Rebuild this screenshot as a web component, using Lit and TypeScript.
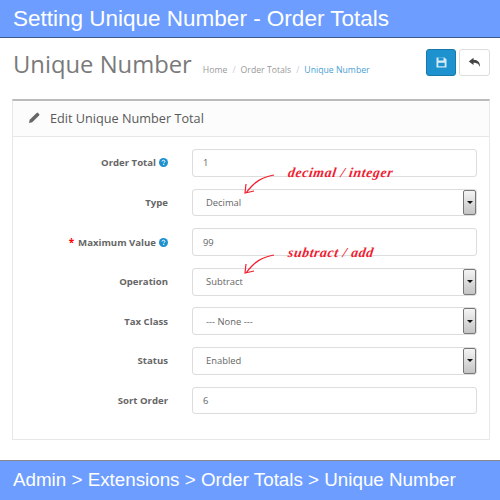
import { LitElement, html, css, nothing } from "lit";
import { customElement } from "lit/decorators.js";

const help = html`<svg class="help" viewBox="0 0 10 10" width="9" height="9"><circle cx="5" cy="5" r="5" fill="#1e91cf"/><path d="M3.4 3.9C3.5 2.9 4.2 2.5 5 2.5c.9 0 1.6.5 1.6 1.3 0 1.2-1.3 1.1-1.3 2.1" fill="none" stroke="#fff" stroke-width="1.1"/><rect x="4.6" y="6.6" width="1.3" height="1.2" fill="#fff"/></svg>`;

const rows = [
  { label: "Order Total", value: "1", help: true },
  { label: "Type", value: "Decimal", select: true },
  { label: "Maximum Value", value: "99", help: true, req: true },
  { label: "Operation", value: "Subtract", select: true },
  { label: "Tax Class", value: "--- None ---", select: true },
  { label: "Status", value: "Enabled", select: true },
  { label: "Sort Order", value: "6" },
];

@customElement("app-root")
export class AppRoot extends LitElement {
  static styles = css`
    :host { display: block; width: 500px; height: 500px; position: relative; overflow: hidden; background: #fff; font-family: "Open Sans", sans-serif; color: #666; }
    .page { display: flex; flex-direction: column; height: 500px; }
    .banner { background: #6d9eff; color: #fff; font-family: "Liberation Sans", sans-serif; font-size: 22.5px; height: 37px; line-height: 37px; padding-left: 13px; border-bottom: 1px solid #3d5a8a; white-space: nowrap; }
    .head { display: flex; align-items: flex-start; height: 61px; padding: 10px 10px 0 13px; box-sizing: border-box; }
    h1 { margin: 0; font-size: 23.8px; font-weight: 400; line-height: 32px; color: #7a7a7a; white-space: nowrap; }
    .crumbs { display: flex; gap: 5px; font-size: 8.7px; margin: 16px 0 0 11px; color: #999; white-space: nowrap; line-height: 12px; }
    .crumbs .sep { color: #ccc; }
    .crumbs .cur { color: #4a9fd4; }
    .btns { margin-left: auto; display: flex; gap: 3px; }
    .btn { width: 30px; height: 27px; border-radius: 3px; display: flex; align-items: center; justify-content: center; box-sizing: border-box; margin-top: 1px; }
    .save { background: #1e91cf; border: 1px solid #1978ab; }
    .back { background: #fff; border: 1px solid #ddd; width: 31px; }
    .panel { margin: 0 10px 0 12px; height: 341px; border: 1px solid #e8e8e8; border-top: 2px solid #bbb; box-sizing: border-box; display: flex; flex-direction: column; }
    .phead { height: 33px; padding-bottom: 2px; background: #fcfcfc; border-bottom: 1px solid #e8e8e8; display: flex; align-items: center; padding-left: 16px; gap: 10px; font-size: 12.7px; color: #595959; white-space: nowrap; box-sizing: content-box; }
    .form { display: grid; grid-auto-rows: 27.8px; row-gap: 11.8px; padding: 12px 12px 0 0; }
    .row { display: grid; grid-template-columns: 179px 1fr; align-items: center; }
    label { display: flex; justify-content: flex-end; align-items: center; gap: 3px; font-size: 9.6px; font-weight: 700; color: #666; white-space: nowrap; padding-right: 24px; }
    .req { color: #f00; margin-right: 1px; font-size: 10px; }
    .help { margin-left: 0; }
    .field { height: 100%; border: 1px solid #ddd; border-radius: 3px; display: flex; align-items: center; padding-left: 10px; font-size: 9.4px; color: #666; box-sizing: border-box; position: relative; box-shadow: inset 0 0 1px #eee; }
    .field.sel { padding-left: 13px; }
    .arrow { position: absolute; right: 0; top: 0; bottom: 0; width: 13px; border: 1px solid #777; border-radius: 2px; background: linear-gradient(#f4f4f4, #c4c4c4); display: flex; align-items: center; justify-content: center; box-sizing: border-box; }
    .arrow i { width: 0; height: 0; border: 3px solid transparent; border-top: 3px solid #111; border-bottom: 0; }
    .footer { margin-top: auto; height: 40px; background: #6d9eff; border-top: 1px solid #888; color: #fff; font-family: "Liberation Sans", sans-serif; font-size: 18.8px; line-height: 37px; padding-left: 13px; box-sizing: border-box; white-space: nowrap; }
    .note { position: absolute; color: #f02030; font-family: "Liberation Serif", serif; font-style: italic; font-weight: 700; font-size: 13.8px; letter-spacing: 0.6px; white-space: nowrap; transform: skewX(-8deg); line-height: 16px; }
    .n1 { left: 288px; top: 165px; }
    .n2 { left: 288px; top: 245px; }
    .arrows { position: absolute; left: 0; top: 0; pointer-events: none; }
  `;

  render() {
    return html`
      <div class="page">
        <div class="banner">Setting Unique Number - Order Totals</div>
        <div class="head">
          <h1>Unique Number</h1>
          <div class="crumbs"><span>Home</span><span class="sep">/</span><span>Order Totals</span><span class="sep">/</span><span class="cur">Unique Number</span></div>
          <div class="btns">
            <div class="btn save"><svg width="11" height="11" viewBox="0 0 11 11"><path d="M.5.5h8l2 2v8H.5z" fill="#d5ecf8"/><rect x="2.5" y=".5" width="5" height="3" fill="#1e91cf"/><rect x="2.3" y="5.8" width="6.4" height="3.5" fill="#1e91cf"/></svg></div>
            <div class="btn back"><svg width="13" height="11" viewBox="0 0 13 11"><path d="M5.5.8.8 4.4l4.7 3.6V5.7c3 0 5 .6 6.4 4.2.5-4.4-2-7-6.4-7.1z" fill="#444"/></svg></div>
          </div>
        </div>
        <div class="panel">
          <div class="phead"><svg width="11" height="11" viewBox="0 0 11 11"><path d="M0 11l.7-3.2L7.6.9a1 1 0 0 1 1.4 0l1.1 1.1a1 1 0 0 1 0 1.4L3.2 10.3z" fill="#666"/></svg><span>Edit Unique Number Total</span></div>
          <div class="form">
            ${rows.map((r) => html`
              <div class="row">
                <label>${r.req ? html`<span class="req">*</span>` : nothing}${r.label}${r.help ? help : nothing}</label>
                <div class="field ${r.select ? "sel" : ""}">${r.value}${r.select ? html`<div class="arrow"><i></i></div>` : nothing}</div>
              </div>`)}
          </div>
        </div>
        <div class="footer">Admin &gt; Extensions &gt; Order Totals &gt; Unique Number</div>
      </div>
      <div class="note n1">decimal / integer</div>
      <div class="note n2">subtract / add</div>
      <svg class="arrows" width="500" height="500" viewBox="0 0 500 500" fill="none" stroke="#f02030" stroke-width="1.2">
        <path d="M274 175c-12 2-20 7-28 18M246 184l-1 9 9-2"/>
        <path d="M274 255c-12 2-20 7-28 18M246 264l-1 9 9-2"/>
      </svg>
    `;
  }
}
